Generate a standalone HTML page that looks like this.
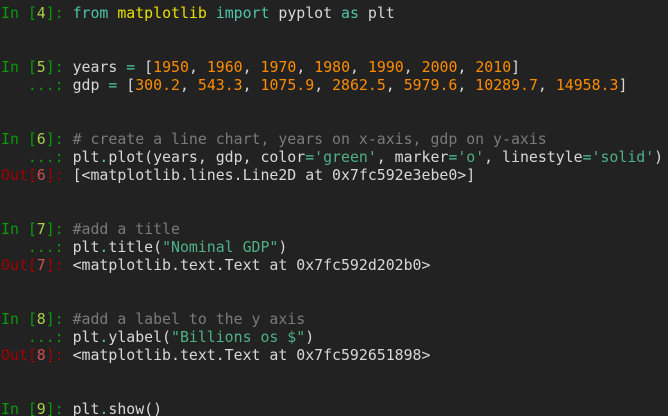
<!DOCTYPE html>
<html><head><meta charset="utf-8"><style>
html,body{margin:0;padding:0;background:#222222;width:668px;height:416px;overflow:hidden}
pre{margin:0;padding:4px 0 0 1px;font-family:"DejaVu Sans Mono","Liberation Mono",monospace;font-size:14.87px;line-height:18px;color:#d8d8d8}
.p{color:#0a9a0a}.n{color:#a8d048}.o{color:#a00000}.on{color:#d05050}
.k{color:#4ec6a8}.y{color:#e8e000}.num{color:#ff8c00}.c{color:#7a7a7a}.s{color:#4fb08a}.op{color:#4ec6a8}
</style></head><body><pre><span class="p">In [</span><span class="n">4</span><span class="p">]: </span><span class="k">from</span> <span class="y">matplotlib</span> <span class="k">import</span> pyplot <span class="k">as</span> plt


<span class="p">In [</span><span class="n">5</span><span class="p">]: </span>years <span class="op">=</span> [<span class="num">1950</span>, <span class="num">1960</span>, <span class="num">1970</span>, <span class="num">1980</span>, <span class="num">1990</span>, <span class="num">2000</span>, <span class="num">2010</span>]
<span class="p">   ...: </span>gdp <span class="op">=</span> [<span class="num">300.2</span>, <span class="num">543.3</span>, <span class="num">1075.9</span>, <span class="num">2862.5</span>, <span class="num">5979.6</span>, <span class="num">10289.7</span>, <span class="num">14958.3</span>]


<span class="p">In [</span><span class="n">6</span><span class="p">]: </span><span class="c"># create a line chart, years on x-axis, gdp on y-axis</span>
<span class="p">   ...: </span>plt<span class="op">.</span>plot(years, gdp, color<span class="op">=</span><span class="s">'green'</span>, marker<span class="op">=</span><span class="s">'o'</span>, linestyle<span class="op">=</span><span class="s">'solid'</span>)
<span class="o">Out[</span><span class="on">6</span><span class="o">]: </span>[&lt;matplotlib.lines.Line2D at 0x7fc592e3ebe0&gt;]


<span class="p">In [</span><span class="n">7</span><span class="p">]: </span><span class="c">#add a title</span>
<span class="p">   ...: </span>plt<span class="op">.</span>title(<span class="s">"Nominal GDP"</span>)
<span class="o">Out[</span><span class="on">7</span><span class="o">]: </span>&lt;matplotlib.text.Text at 0x7fc592d202b0&gt;


<span class="p">In [</span><span class="n">8</span><span class="p">]: </span><span class="c">#add a label to the y axis</span>
<span class="p">   ...: </span>plt<span class="op">.</span>ylabel(<span class="s">"Billions os $"</span>)
<span class="o">Out[</span><span class="on">8</span><span class="o">]: </span>&lt;matplotlib.text.Text at 0x7fc592651898&gt;


<span class="p">In [</span><span class="n">9</span><span class="p">]: </span>plt<span class="op">.</span>show()
</pre></body></html>
